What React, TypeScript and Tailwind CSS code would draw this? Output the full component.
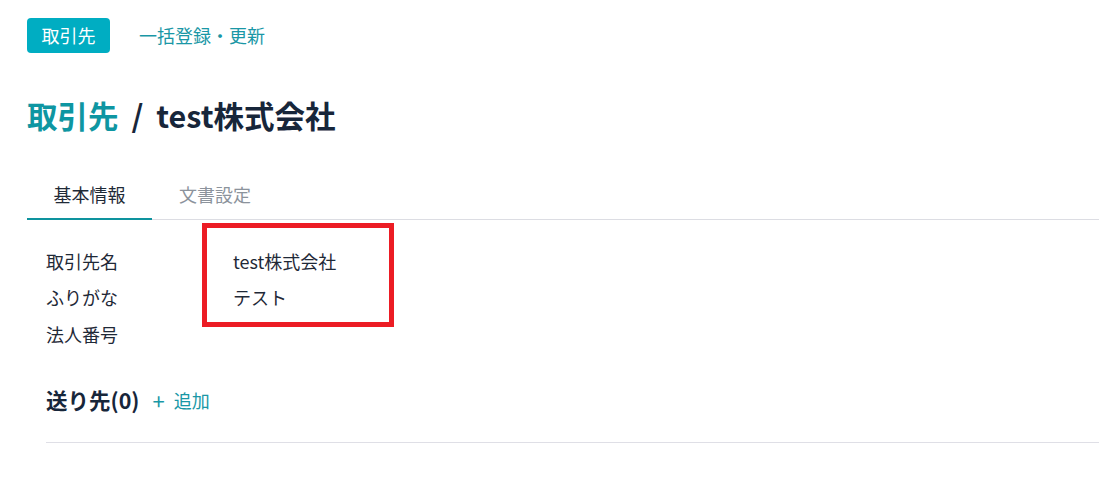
import React from 'react';

const rows = [
  { label: '取引先名', value: 'test株式会社' },
  { label: 'ふりがな', value: 'テスト' },
  { label: '法人番号', value: '' },
];

export default function App() {
  return (
    <div
      className="relative min-h-[489px] bg-white text-[18px] text-[#1f2937]"
      style={{ fontFamily: '"Noto Sans CJK JP", "Noto Sans", sans-serif' }}
    >
      {/* top nav */}
      <div className="flex items-center gap-[29px] pl-[27px] pt-[18px]">
        <button className="h-[35px] w-[83px] rounded-[4px] bg-[#00adc2] text-[18px] text-white">取引先</button>
        <a className="text-[18px] text-[#1a97a6]">一括登録・更新</a>
      </div>

      {/* title */}
      <h1 className="mt-[42px] pl-[27px] text-[30.5px] font-bold leading-[40px] text-[#17263a]">
        <span className="text-[#0e96a2]">取引先</span>
        <span className="mx-[13px]">/</span>
        test株式会社
      </h1>

      {/* tabs */}
      <div className="mt-[46px] ml-[27px] flex border-b border-[#dcdde3]">
        <div className="-mb-px w-[125px] border-b-2 border-[#0e939e] pb-[10px] text-center text-[18px] text-[#1f2a37]">
          基本情報
        </div>
        <div className="w-[126px] pb-[10px] text-center text-[18px] text-[#8c939c]">文書設定</div>
      </div>

      {/* details */}
      <div className="mt-[28px] flex flex-col gap-[10.5px] pl-[46px]">
        {rows.map((r) => (
          <div key={r.label} className="flex h-[26px] items-center text-[18px]">
            <div className="w-[187px]">{r.label}</div>
            <div>{r.value}</div>
          </div>
        ))}
      </div>

      {/* destinations */}
      <div className="mt-[37px] flex items-center gap-[13px] pl-[46px]">
        <span className="text-[21.5px] font-bold text-[#17263a]">送り先(0)</span>
        <a className="flex items-center gap-[9px] text-[18px] text-[#1a97a6]">
          <span className="text-[22px] leading-none">+</span>
          <span>追加</span>
        </a>
      </div>
      <div className="ml-[46px] mt-[26px] border-b border-[#dfdfe6]" />

      {/* annotation box */}
      <div className="absolute left-[202px] top-[223px] h-[104px] w-[192px] border-[5px] border-[#ec1c24]" />
    </div>
  );
}
